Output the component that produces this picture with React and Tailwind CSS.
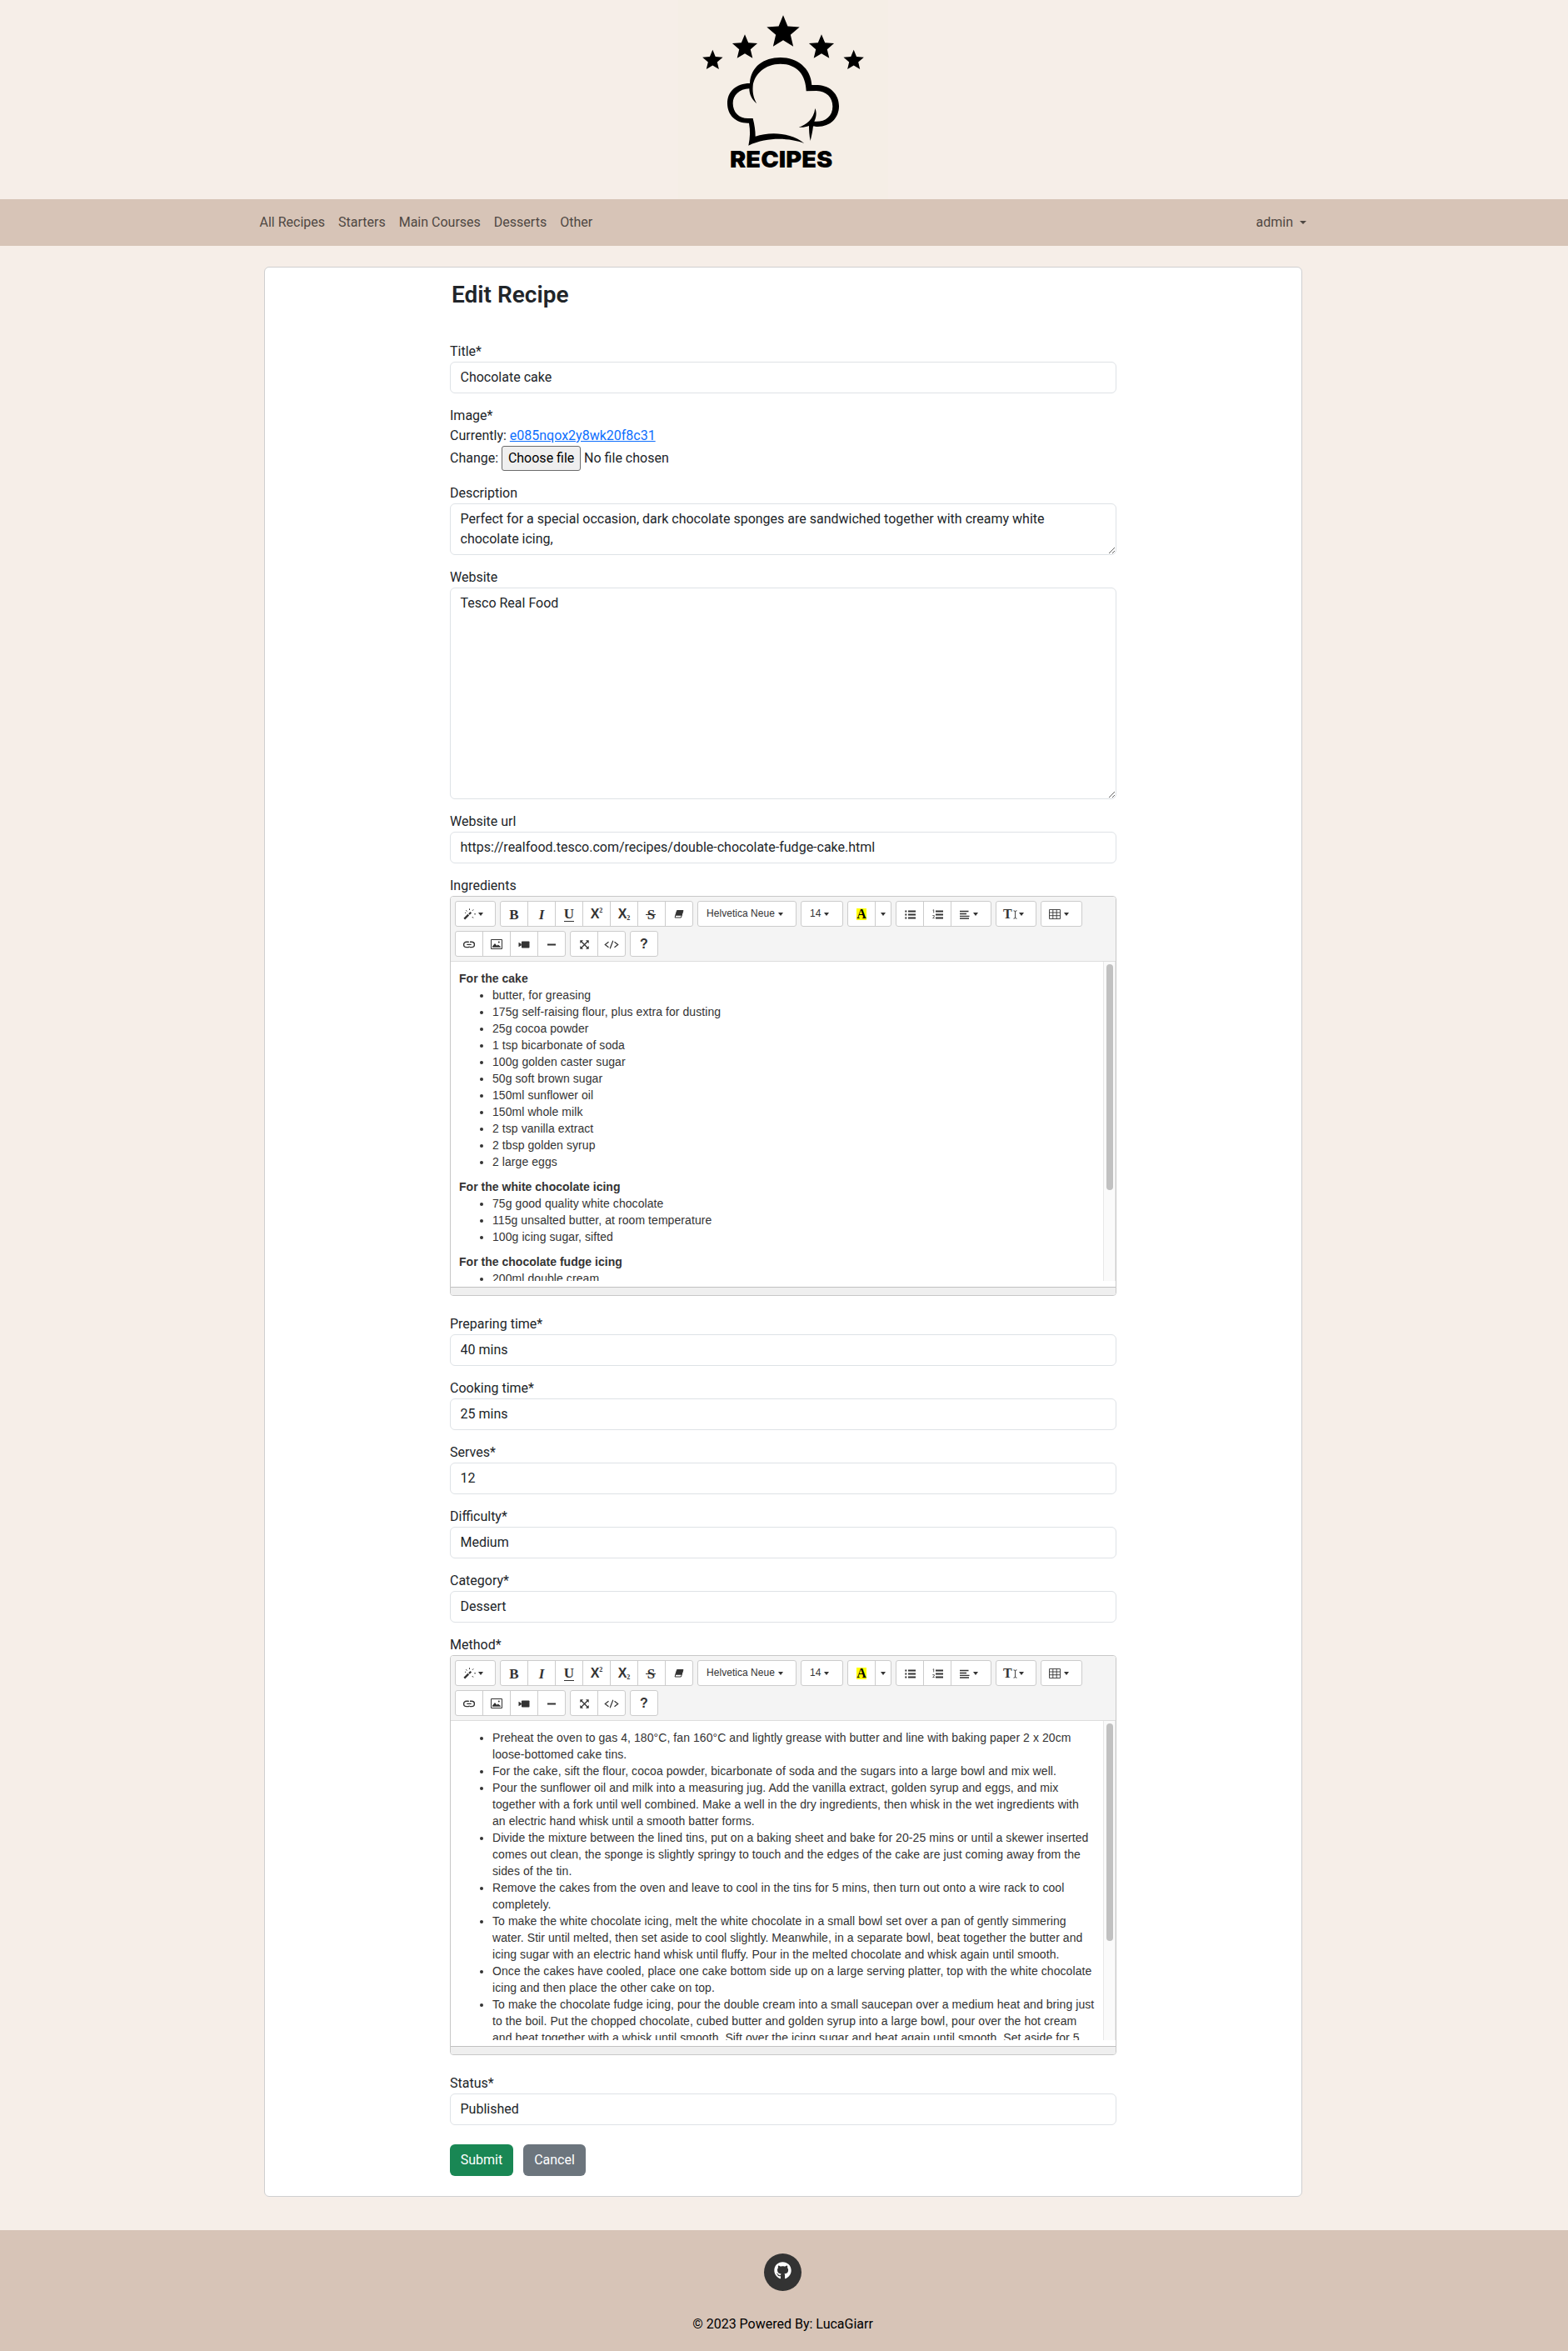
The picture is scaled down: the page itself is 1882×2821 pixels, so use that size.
import React from "react";
import { FaGithub } from "react-icons/fa";

function star(cx, cy, r) {
  const pts = [];
  for (let i = 0; i < 10; i++) {
    const a = (Math.PI / 5) * i - Math.PI / 2;
    const q = i % 2 ? r * 0.45 : r;
    pts.push((cx + q * Math.cos(a)).toFixed(1) + "," + (cy + q * Math.sin(a)).toFixed(1));
  }
  return pts.join(" ");
}

function Logo() {
  return (
    <svg width="252" height="239" viewBox="42 0 756 717" className="bg-[#f5eee6]" role="img" aria-label="Recipes">
      <polygon points={star(420, 117, 62)} />
      <polygon points={star(282, 171, 47.5)} />
      <polygon points={star(558, 171, 47.5)} />
      <polygon points={star(166, 218, 38.5)} />
      <polygon points={star(674, 218, 38.5)} />
      <path d="M300 300C303 240 350 207 410 207C470 207 520 245 523 306L545 306C590 308 621 340 621 382C621 425 590 456 545 456C537 456 532 456 528 454C526 475 522 490 518 507C514 488 513 470 513 453C500 458 490 459 476 458C503 449 530 430 535 390C542 405 539 424 532 437C570 440 598 420 598 383C598 350 575 328 540 327L503 328C502 270 470 230 410 230C355 230 315 268 311 310C309 335 314 355 325 373C308 360 298 340 298 319C262 319 239 345 239 372C239 405 262 427 295 426L311 426C317 450 320 470 320 491C370 475 445 475 496 516C445 498 370 490 295 524C301 495 302 470 297 443C250 445 219 415 219 372C219 330 250 300 300 300Z" />
      <text x="228" y="603" textLength="370" lengthAdjust="spacingAndGlyphs" fontSize="83" fontWeight="900" className="font-[Inter,sans-serif]">
        RECIPES
      </text>
    </svg>
  );
}

const input =
  "block h-[38px] w-full rounded-md border border-[#dee2e6] bg-white pr-3 pb-[2px] pl-[11.5px] text-base text-[#212529] outline-none";
const area =
  "block w-full resize rounded-md border border-[#dee2e6] bg-white py-1.5 pr-3 pl-[11.5px] text-base leading-6 text-[#212529] outline-none";

function Field({ label, value }) {
  return (
    <div className="mb-[15px]">
      <label className="block leading-6">{label}</label>
      <input className={input} defaultValue={value} />
    </div>
  );
}

function Caret() {
  return (
    <svg width="6" height="4" viewBox="0 0 6 4" className="shrink-0">
      <path d="M0 0H6L3 4Z" fill="#333" />
    </svg>
  );
}

function Group({ children }) {
  return (
    <div className="flex h-[31px] divide-x divide-[#ccc] overflow-hidden rounded-[3px] border border-[#ccc] bg-white">
      {children}
    </div>
  );
}

function Btn({ w = "w-[32px]", children, start }) {
  return (
    <button
      className={
        "box-content flex h-[28px] shrink-0 items-center pt-px text-[#333] " + (start ? "justify-start " : "justify-center ") + w
      }
    >
      {children}
    </button>
  );
}

const serif = "font-['Liberation_Serif',serif] text-[17px] leading-none";

function Svg({ w, h, children, className = "" }) {
  return (
    <svg width={w} height={h} viewBox={`0 0 ${w} ${h}`} fill="none" stroke="#333" className={"shrink-0 " + className}>
      {children}
    </svg>
  );
}

function Toolbar() {
  return (
    <div className="flex h-[78px] flex-wrap content-start gap-[5px] border-b border-[#ddd] bg-[#f4f4f4] p-[5px]">
      <Group>
        <Btn w="w-[47px]" start>
          <Svg w={17} h={14} className="ml-[9px]">
            <path d="M1.3 12.7L6.3 7.7" strokeWidth="2.4" />
            <path d="M7 7L9.3 4.7" strokeWidth="2.2" />
            <path d="M3.3 2.4L4.6 3.4M7.5 .3V2M12.2 1.4L11 2.8M13.2 6.8H15M10.8 10L12 11.6M2 5.3H3.2" strokeWidth="1" />
          </Svg>
          <span className="w-[1px]" />
          <Caret />
        </Btn>
      </Group>
      <Group>
        <Btn><span className={serif + " font-bold"}>B</span></Btn>
        <Btn><span className={serif + " font-bold italic"}>I</span></Btn>
        <Btn><span className={serif + " border-b border-[#333] text-[15px] leading-[11px] font-bold"}>U</span></Btn>
        <Btn>
          <span className="font-['Liberation_Sans',sans-serif] text-[16px] leading-none font-bold">X</span>
          <span className="mb-[8px] font-['Liberation_Serif',serif] text-[8px] leading-none font-bold">2</span>
        </Btn>
        <Btn>
          <span className="font-['Liberation_Sans',sans-serif] text-[16px] leading-none font-bold">X</span>
          <span className="mt-[10px] font-['Liberation_Serif',serif] text-[8px] leading-none font-bold">2</span>
        </Btn>
        <Btn>
          <span className="flex items-center">
            <span className={serif + " font-bold"}>S</span>
            <span className="-ml-[11px] h-px w-[12px] bg-[#333]" />
          </span>
        </Btn>
        <Btn>
          <Svg w={12} h={12}>
            <path d="M3.6 1.5H11L9.3 7H1.9Z" fill="#333" />
            <path d="M1.9 7H9.3L8.4 10H1.1Z" />
          </Svg>
        </Btn>
      </Group>
      <Group>
        <Btn w="w-[117px]" start>
          <span className="mt-[-2px] mr-[4px] ml-[10px] font-['Liberation_Sans',sans-serif] text-[12px] tracking-[0.04px]">Helvetica Neue</span>
          <Caret />
        </Btn>
      </Group>
      <Group>
        <Btn w="w-[49px]" start>
          <span className="mt-[-2px] mr-[4px] ml-[10px] font-['Liberation_Sans',sans-serif] text-[12px]">14</span>
          <Caret />
        </Btn>
      </Group>
      <Group>
        <Btn>
          <span className="flex h-[14px] w-[12px] items-center justify-center bg-[#ff0] font-['Liberation_Serif',serif] text-[16px] leading-none font-bold text-black">
            A
          </span>
        </Btn>
        <Btn w="w-[18px]"><Caret /></Btn>
      </Group>
      <Group>
        <Btn>
          <Svg w={13} h={11}>
            <path d="M4 1.5H13M4 5.5H13M4 9.5H13" strokeWidth="2" />
            <path d="M.3 1.5H2.3M.3 5.5H2.3M.3 9.5H2.3" strokeWidth="1.8" />
          </Svg>
        </Btn>
        <Btn>
          <Svg w={13} h={12}>
            <path d="M4 2.5H13M4 6.5H13M4 10.5H13" strokeWidth="2" />
            <path d="M.6 1.2L1.7 .7V4.4M.3 7.6H2.3V9L.6 10.6H2.7" strokeWidth=".8" />
          </Svg>
        </Btn>
        <Btn w="w-[47px]" start>
          <Svg w={12} h={11} className="mr-[4px] ml-[10px]">
            <path d="M0 1.5H10.5M0 4.5H8M0 7.3H11.5M0 10H11" strokeWidth="1.3" />
          </Svg>
          <Caret />
        </Btn>
      </Group>
      <Group>
        <Btn w="w-[47px]" start>
          <span className="ml-[8px] font-['Liberation_Serif',serif] text-[16px] leading-none font-bold">T</span>
          <Svg w={5} h={11} className="mr-[2px] ml-px">
            <path d="M.5 .8Q2.5 .8 2.5 2V9Q2.5 10.2 .5 10.2M4.5 .8Q2.5 .8 2.5 2M2.5 9Q2.5 10.2 4.5 10.2" strokeWidth=".9" />
          </Svg>
          <Caret />
        </Btn>
      </Group>
      <Group>
        <Btn w="w-[48px]" start>
          <Svg w={14} h={12} className="mr-[4px] ml-[9px]">
            <path d="M.5 .5H13.5V11.5H.5ZM.5 4H13.5M.5 7.7H13.5M4.8 .5V11.5M9.2 .5V11.5" strokeWidth=".9" />
          </Svg>
          <Caret />
        </Btn>
      </Group>
      <Group>
        <Btn>
          <Svg w={14} h={9}>
            <path d="M6 1.2H3.8A3.2 3.2 0 0 0 3.8 7.6H6.2A2.6 2.6 0 0 0 7.6 6.8M8 1.2H10.2A3.2 3.2 0 0 1 10.2 7.6H8M6 1.2Q6.5 1.2 7 1.5M4.3 4.4H9.7" strokeWidth="1.4" />
          </Svg>
        </Btn>
        <Btn>
          <Svg w={14} h={12}>
            <path d="M.5 .5H13.5V11.5H.5Z" />
            <path d="M2 9.8V8.6L5 5L7.3 7.8L8.7 6.5L12 9V9.8Z" fill="#333" stroke="none" />
            <circle cx="9.8" cy="3.6" r="1" fill="#333" stroke="none" />
          </Svg>
        </Btn>
        <Btn>
          <Svg w={14} h={9}>
            <rect x="4" y=".5" width="9.5" height="8" rx=".8" fill="#333" stroke="none" />
            <path d="M.5 1.7L3.7 3.4V5.6L.5 7.3Z" fill="#333" stroke="none" />
          </Svg>
        </Btn>
        <Btn>
          <Svg w={10} h={3}>
            <path d="M0 1.5H10" strokeWidth="1.8" />
          </Svg>
        </Btn>
      </Group>
      <Group>
        <Btn>
          <Svg w={11} h={11}>
            <path d="M1.5 1.5L9.5 9.5M9.5 1.5L1.5 9.5" strokeWidth="1.3" />
            <path d="M.3 .3H4L.3 4ZM10.7 .3H7L10.7 4ZM.3 10.7H4L.3 7ZM10.7 10.7H7L10.7 7Z" fill="#333" stroke="none" />
          </Svg>
        </Btn>
        <Btn>
          <Svg w={18} h={11}>
            <path d="M5.5 2.3L1.3 5.5L5.5 8.7M12.5 2.3L16.7 5.5L12.5 8.7M10.8 .8L7.2 10.2" strokeWidth="1.2" />
          </Svg>
        </Btn>
      </Group>
      <Group>
        <Btn>
          <span className="font-['Liberation_Sans',sans-serif] text-[16px] leading-none font-bold">?</span>
        </Btn>
      </Group>
    </div>
  );
}

function Editor({ label, thumb, children }) {
  return (
    <div className="mb-[22px]">
      <label className="block leading-6">{label}</label>
      <div className="h-[480px] overflow-hidden rounded-[4px] border border-[#c8c8c8]">
        <Toolbar />
        <div className="flex h-[383px] overflow-hidden">
          <div className="flex-1 overflow-hidden p-[10px] font-['Liberation_Sans',Arial,sans-serif] text-[14px] leading-5 whitespace-nowrap text-[#333]">
            {children}
          </div>
          <div className="w-[15px] shrink-0 border-x border-[#e8e8e8] bg-[#fafafa] pt-[3px] pl-[3px]">
            <div className={"w-[8px] rounded-full bg-[#c1c1c1] " + thumb} />
          </div>
        </div>
        <div className="mt-[7px] h-[10px] border-t border-[#c0c0c0] bg-[#efefef]" />
      </div>
    </div>
  );
}

const ingredients = [
  ["For the cake", ["butter, for greasing", "175g self-raising flour, plus extra for dusting", "25g cocoa powder", "1 tsp bicarbonate of soda", "100g golden caster sugar", "50g soft brown sugar", "150ml sunflower oil", "150ml whole milk", "2 tsp vanilla extract", "2 tbsp golden syrup", "2 large eggs"]],
  ["For the white chocolate icing", ["75g good quality white chocolate", "115g unsalted butter, at room temperature", "100g icing sugar, sifted"]],
  ["For the chocolate fudge icing", ["200ml double cream"]],
];

const method = [
  ["Preheat the oven to gas 4, 180°C, fan 160°C and lightly grease with butter and line with baking paper 2 x 20cm", "loose-bottomed cake tins."],
  ["For the cake, sift the flour, cocoa powder, bicarbonate of soda and the sugars into a large bowl and mix well."],
  ["Pour the sunflower oil and milk into a measuring jug. Add the vanilla extract, golden syrup and eggs, and mix", "together with a fork until well combined. Make a well in the dry ingredients, then whisk in the wet ingredients with", "an electric hand whisk until a smooth batter forms."],
  ["Divide the mixture between the lined tins, put on a baking sheet and bake for 20-25 mins or until a skewer inserted", "comes out clean, the sponge is slightly springy to touch and the edges of the cake are just coming away from the", "sides of the tin."],
  ["Remove the cakes from the oven and leave to cool in the tins for 5 mins, then turn out onto a wire rack to cool", "completely."],
  ["To make the white chocolate icing, melt the white chocolate in a small bowl set over a pan of gently simmering", "water. Stir until melted, then set aside to cool slightly. Meanwhile, in a separate bowl, beat together the butter and", "icing sugar with an electric hand whisk until fluffy. Pour in the melted chocolate and whisk again until smooth."],
  ["Once the cakes have cooled, place one cake bottom side up on a large serving platter, top with the white chocolate", "icing and then place the other cake on top."],
  ["To make the chocolate fudge icing, pour the double cream into a small saucepan over a medium heat and bring just", "to the boil. Put the chopped chocolate, cubed butter and golden syrup into a large bowl, pour over the hot cream", "and beat together with a whisk until smooth. Sift over the icing sugar and beat again until smooth. Set aside for 5"],
];

export default function App() {
  return (
    <div className="h-[2821px] overflow-hidden bg-[#f6eee8] font-[Roboto,sans-serif] text-base text-[#212529]">
      <header className="flex h-[239px] justify-center pr-[2px]">
        <Logo />
      </header>
      <nav className="flex h-[56px] items-center justify-between bg-[#d7c4b7] pr-[314px] pl-[311.5px] text-[#4f4843]">
        <div className="flex gap-4">
          <a>All Recipes</a>
          <a>Starters</a>
          <a>Main Courses</a>
          <a>Desserts</a>
          <a>Other</a>
        </div>
        <div className="flex items-center gap-2">
          <a>admin</a>
          <span className="border-x-[4.8px] border-t-[4.8px] border-x-transparent border-t-[#4f4843]" />
        </div>
      </nav>
      <main className="mt-[25px] ml-[317px] h-[2316px] w-[1246px] rounded-md border border-[#cfcfd0] bg-white px-[222px]">
        <h1 className="mt-[16px] mb-[39px] pl-[2px] text-[28px] leading-[34px] font-semibold">Edit Recipe</h1>
        <Field label="Title*" value="Chocolate cake" />
        <div className="mb-[15px] leading-6">
          <div>Image*</div>
          <div>
            Currently: <a className="text-[#0d6efd] underline">e085nqox2y8wk20f8c31</a>
          </div>
          <div className="flex h-[30px] items-center">
            Change:
            <button className="mr-1 ml-[4px] h-[30px] w-[95px] rounded-[3px] border border-[#6b6b6b] bg-[#efefef] text-black">Choose file</button>
            No file chosen
          </div>
        </div>
        <div className="mb-[15px]">
          <label className="block leading-6">Description</label>
          <textarea
            className={area + " h-[62px]"}
            defaultValue={"Perfect for a special occasion, dark chocolate sponges are sandwiched together with creamy white\nchocolate icing,"}
          />
        </div>
        <div className="mb-[15px]">
          <label className="block leading-6">Website</label>
          <textarea className={area + " h-[254px]"} defaultValue="Tesco Real Food" />
        </div>
        <Field label="Website url" value="https://realfood.tesco.com/recipes/double-chocolate-fudge-cake.html" />
        <Editor label="Ingredients" thumb="h-[271px]">
          {ingredients.map(([title, items]) => (
            <div key={title} className="mb-[10px]">
              <div className="font-bold tracking-[0.02px]">{title}</div>
              <ul className="list-disc pl-[40px] tracking-[0.07px]">
                {items.map((t) => (
                  <li key={t}>{t}</li>
                ))}
              </ul>
            </div>
          ))}
        </Editor>
        <Field label="Preparing time*" value="40 mins" />
        <Field label="Cooking time*" value="25 mins" />
        <Field label="Serves*" value="12" />
        <Field label="Difficulty*" value="Medium" />
        <Field label="Category*" value="Dessert" />
        <Editor label="Method*" thumb="h-[261px]">
          <ul className="list-disc pl-[40px] tracking-[0.07px]">
            {method.map((lines) => (
              <li key={lines[0]}>
                {lines.map((l) => (
                  <span key={l} className="block">{l}</span>
                ))}
              </li>
            ))}
          </ul>
        </Editor>
        <Field label="Status*" value="Published" />
        <div className="mt-[23px] flex gap-3">
          <button className="h-[38px] w-[76px] rounded-md bg-[#198754] text-white">Submit</button>
          <button className="h-[38px] w-[75px] rounded-md bg-[#6c757d] text-white">Cancel</button>
        </div>
      </main>
      <footer className="mt-[40px] flex h-[145px] flex-col items-center bg-[#d7c4b7] pt-[28px] pr-[3px] text-black">
        <a className="flex h-[45px] w-[45px] justify-center rounded-full bg-[#333] pt-[10px] text-white">
          <FaGithub size={21} />
        </a>
        <p className="mt-[28px] leading-6">© 2023 Powered By: LucaGiarr</p>
      </footer>
    </div>
  );
}
